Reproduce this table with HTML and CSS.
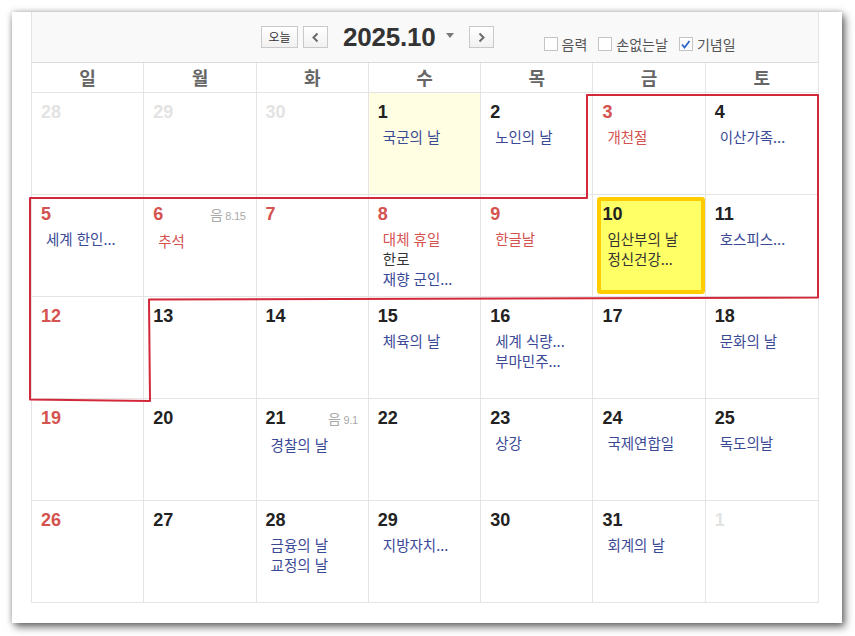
FILE: index.html
```html
<!DOCTYPE html>
<html lang="ko">
<head>
<meta charset="utf-8">
<title>2025.10</title>
<link rel="stylesheet" href="styles.css">
</head>
<body>
<div class="page">
  <div class="card">
    <div class="cal">
      <div class="toolbar">
        <button class="btn btn-today">오늘</button>
        <button class="btn btn-arrow btn-prev"><svg width="23" height="19" viewBox="0 0 23 19"><path d="M13.5 5.5 L9.5 9.5 L13.5 13.5" fill="none" stroke="#6a6a6a" stroke-width="2"/></svg></button>
        <span class="title">2025.10</span>
        <span class="caret"></span>
        <button class="btn btn-arrow btn-next"><svg width="23" height="19" viewBox="0 0 23 19"><path d="M9.5 5.5 L13.5 9.5 L9.5 13.5" fill="none" stroke="#6a6a6a" stroke-width="2"/></svg></button>
        <div class="opts">
          <label class="opt"><span class="box"></span>음력</label>
          <label class="opt"><span class="box"></span>손없는날</label>
          <label class="opt"><span class="box"><svg width="11" height="11" viewBox="0 0 11 11"><path d="M2 5.5 L4.5 8.5 L9.5 2" fill="none" stroke="#2a64c4" stroke-width="1.8"/></svg></span>기념일</label>
        </div>
      </div>
      <div class="weekdays">
        <div>일</div><div>월</div><div>화</div><div>수</div><div>목</div><div>금</div><div>토</div>
      </div>
      <div class="grid">
        <div class="cell"><div class="day off">28</div></div>
        <div class="cell"><div class="day off">29</div></div>
        <div class="cell"><div class="day off">30</div></div>
        <div class="cell pale"><div class="day">1</div><div class="evs"><div class="ev">국군의 날</div></div></div>
        <div class="cell"><div class="day">2</div><div class="evs"><div class="ev">노인의 날</div></div></div>
        <div class="cell"><div class="day red">3</div><div class="evs"><div class="ev hol">개천절</div></div></div>
        <div class="cell"><div class="day">4</div><div class="evs"><div class="ev">이산가족...</div></div></div>

        <div class="cell"><div class="day red">5</div><div class="evs"><div class="ev">세계 한인...</div></div></div>
        <div class="cell"><div class="day red">6<span class="lunar"><span class="lk">음</span> 8.15</span></div><div class="evs"><div class="ev hol">추석</div></div></div>
        <div class="cell"><div class="day red">7</div></div>
        <div class="cell"><div class="day red">8</div><div class="evs"><div class="ev hol">대체 휴일</div><div class="ev term">한로</div><div class="ev">재향 군인...</div></div></div>
        <div class="cell"><div class="day red">9</div><div class="evs"><div class="ev hol">한글날</div></div></div>
        <div class="cell today"><div class="day">10</div><div class="evs"><div class="ev term">임산부의 날</div><div class="ev term">정신건강...</div></div></div>
        <div class="cell"><div class="day">11</div><div class="evs"><div class="ev">호스피스...</div></div></div>

        <div class="cell"><div class="day red">12</div></div>
        <div class="cell"><div class="day">13</div></div>
        <div class="cell"><div class="day">14</div></div>
        <div class="cell"><div class="day">15</div><div class="evs"><div class="ev">체육의 날</div></div></div>
        <div class="cell"><div class="day">16</div><div class="evs"><div class="ev">세계 식량...</div><div class="ev">부마민주...</div></div></div>
        <div class="cell"><div class="day">17</div></div>
        <div class="cell"><div class="day">18</div><div class="evs"><div class="ev">문화의 날</div></div></div>

        <div class="cell"><div class="day red">19</div></div>
        <div class="cell"><div class="day">20</div></div>
        <div class="cell"><div class="day">21<span class="lunar"><span class="lk">음</span> 9.1</span></div><div class="evs"><div class="ev">경찰의 날</div></div></div>
        <div class="cell"><div class="day">22</div></div>
        <div class="cell"><div class="day">23</div><div class="evs"><div class="ev">상강</div></div></div>
        <div class="cell"><div class="day">24</div><div class="evs"><div class="ev">국제연합일</div></div></div>
        <div class="cell"><div class="day">25</div><div class="evs"><div class="ev">독도의날</div></div></div>

        <div class="cell"><div class="day red">26</div></div>
        <div class="cell"><div class="day">27</div></div>
        <div class="cell"><div class="day">28</div><div class="evs"><div class="ev">금융의 날</div><div class="ev">교정의 날</div></div></div>
        <div class="cell"><div class="day">29</div><div class="evs"><div class="ev">지방자치...</div></div></div>
        <div class="cell"><div class="day">30</div></div>
        <div class="cell"><div class="day">31</div><div class="evs"><div class="ev">회계의 날</div></div></div>
        <div class="cell"><div class="day off">1</div></div>
      </div>
    </div>
  </div>
  <svg class="marker" width="855" height="636" viewBox="0 0 855 636">
    <path d="M587 95 L818 95 L818 297.5 L149 299.5 L150 401 L30 399.5 L30 198 L587 198 Z" fill="none" stroke="#d3273a" stroke-width="2" stroke-linejoin="round"/>
  </svg>
</div>
</body>
</html>
```
FILE: styles.css
```css
html, body {
  margin: 0;
  padding: 0;
  background: #ffffff;
}

body {
  font-family: "Noto Sans CJK KR", "Noto Sans", sans-serif;
  color: #333;
}

.page {
  position: relative;
  width: 855px;
  height: 636px;
  padding: 12px 0 0 12px;
  box-sizing: border-box;
  overflow: hidden;
}

.card {
  width: 830px;
  height: 611px;
  background: #fff;
  box-sizing: border-box;
  padding: 0 23px 20px 19px;
  box-shadow: 3px 4px 8px rgba(0, 0, 0, 0.55), 0 0 6px rgba(0, 0, 0, 0.25);
}

.cal {
  width: 788px;
  box-sizing: border-box;
  border-left: 1px solid #e4e4e4;
  border-right: 1px solid #e4e4e4;
}

/* toolbar */
.toolbar {
  height: 50px;
  background: #f9f9f9;
  border-bottom: 1px solid #dcdcdc;
  display: flex;
  align-items: center;
  padding-left: 229px;
}

.btn {
  height: 22px;
  box-sizing: border-box;
  border: 1px solid #c9c9c9;
  background: linear-gradient(#ffffff, #f1f1f1);
  padding: 0;
  margin: 0;
  display: flex;
  align-items: center;
  justify-content: center;
  font-family: "Noto Sans CJK KR", sans-serif;
}

.btn-today {
  width: 37px;
  font-size: 12px;
  line-height: 20px;
  color: #333;
}

.btn-arrow {
  width: 25px;
}

.btn-prev {
  margin-left: 5px;
}

.title {
  margin-left: 15px;
  font-family: "Liberation Sans", Arial, sans-serif;
  font-weight: bold;
  font-size: 26px;
  line-height: 30px;
  color: #333;
  letter-spacing: -0.2px;
}

.caret {
  width: 0;
  height: 0;
  margin-left: 10px;
  margin-top: -4px;
  border-left: 4px solid transparent;
  border-right: 4px solid transparent;
  border-top: 5px solid #7a7a7a;
}

.btn-next {
  margin-left: 15px;
}

.opts {
  display: flex;
  align-items: center;
  margin-left: 50px;
  margin-top: 14px;
}

.opt {
  display: flex;
  align-items: center;
  font-size: 14px;
  line-height: 16px;
  color: #555;
  margin-right: 11px;
}

.box {
  width: 14px;
  height: 14px;
  box-sizing: border-box;
  border: 1px solid #c4c4c4;
  background: #fff;
  margin-right: 4px;
  display: flex;
  align-items: center;
  justify-content: center;
}

/* weekday header */
.weekdays {
  display: grid;
  grid-template-columns: repeat(7, 1fr);
  border-bottom: 1px solid #e4e4e4;
}

.weekdays div {
  height: 29px;
  line-height: 29px;
  text-align: center;
  font-size: 18px;
  font-weight: bold;
  color: #666;
  border-right: 1px solid #e4e4e4;
}

.weekdays div:last-child {
  border-right: none;
}

/* grid */
.grid {
  display: grid;
  grid-template-columns: repeat(7, 1fr);
  grid-auto-rows: 102px;
}

.cell {
  position: relative;
  box-sizing: border-box;
  border-right: 1px solid #e4e4e4;
  border-bottom: 1px solid #e4e4e4;
  padding: 9px 10px 0 9px;
}

.cell:nth-child(7n) {
  border-right: none;
}

.cell.pale {
  background: #fffde2;
}

.cell.today::before {
  content: "";
  position: absolute;
  top: 2px;
  left: 4px;
  right: 0;
  bottom: 2px;
  background: #ffff66;
  border: 4px solid #ffcc00;
  border-radius: 3px;
}

.day, .evs {
  position: relative;
}

.day {
  display: flex;
  justify-content: space-between;
  align-items: baseline;
  font-family: "Liberation Sans", Arial, sans-serif;
  font-weight: bold;
  font-size: 18px;
  line-height: 21px;
  color: #222;
}

.day.red {
  color: #d4524f;
}

.day.off {
  color: #e3e3e3;
}

.lunar {
  font-weight: normal;
  font-size: 11px;
  color: #aaa;
  letter-spacing: -0.3px;
}

.lunar .lk {
  font-family: "Noto Sans CJK KR", sans-serif;
  font-size: 14px;
}

.evs {
  margin-top: 4px;
  padding-left: 5px;
}

.ev {
  font-size: 14.5px;
  line-height: 20px;
  color: #3a4996;
  white-space: nowrap;
}

.ev.hol {
  color: #d4524f;
}

.ev.term {
  color: #333;
}

.marker {
  position: absolute;
  top: 0;
  left: 0;
  pointer-events: none;
}
```
